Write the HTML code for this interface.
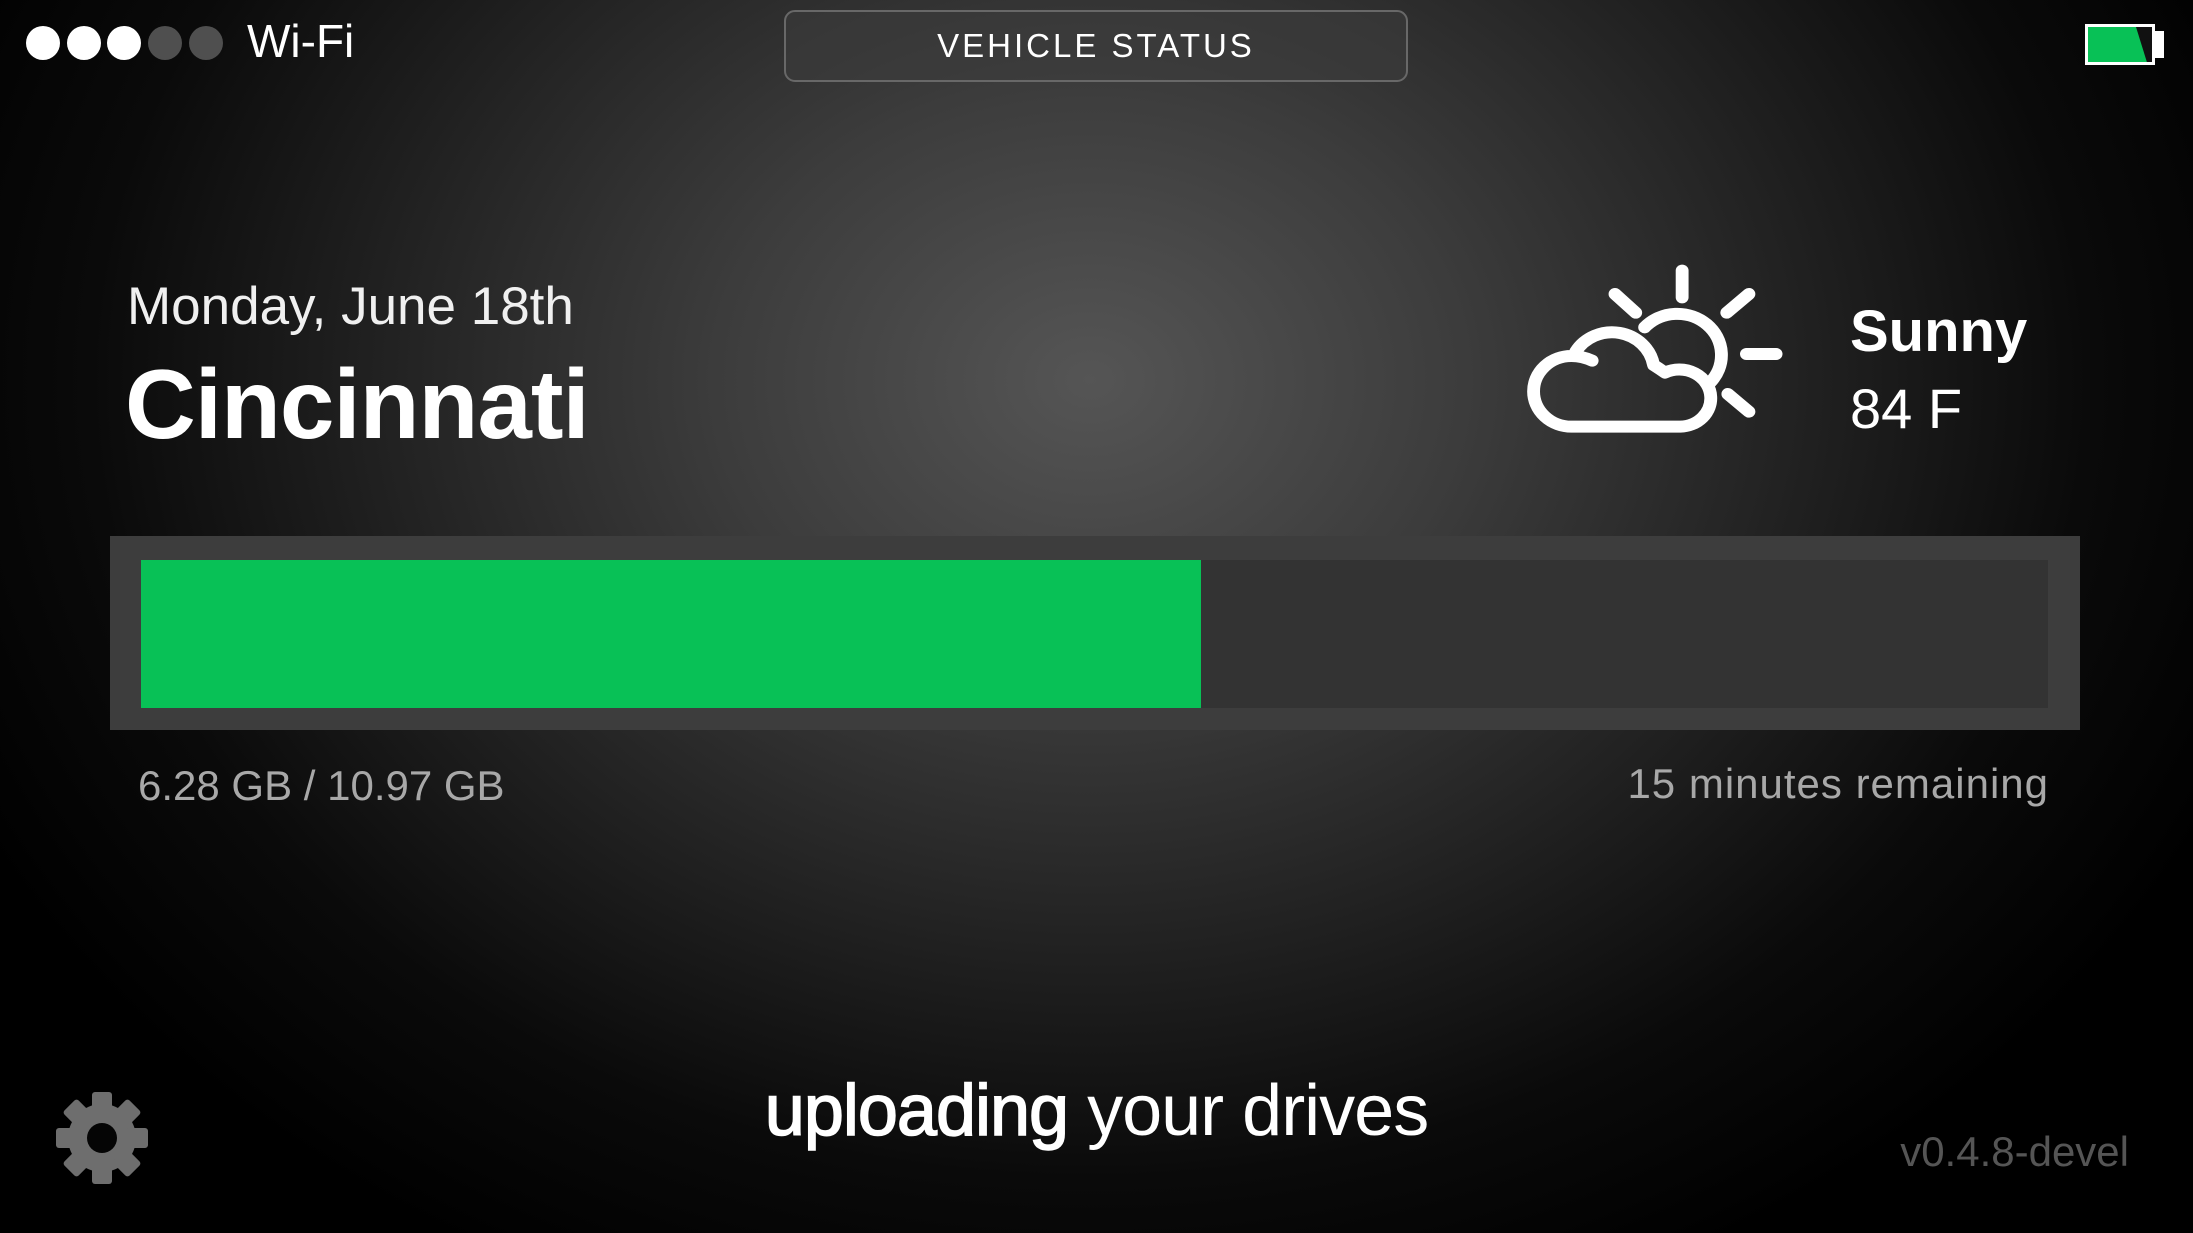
<!DOCTYPE html>
<html><head><meta charset="utf-8"><style>
html,body{margin:0;padding:0;}
body{width:2193px;height:1233px;overflow:hidden;position:relative;font-family:"Liberation Sans",sans-serif;color:#fff;
background:radial-gradient(ellipse 1250px 1000px at 1090px 380px,#555 0%,#3c3c3c 30%,#232323 55%,#0a0a0a 80%,#000 100%);}
.a{position:absolute;white-space:nowrap;}
.dot{position:absolute;top:26px;width:34px;height:34px;border-radius:50%;}
</style></head><body>
<div class="dot" style="left:26px;background:#fff"></div>
<div class="dot" style="left:67px;background:#fff"></div>
<div class="dot" style="left:107px;background:#fff"></div>
<div class="dot" style="left:148px;background:#4f4f4f"></div>
<div class="dot" style="left:189px;background:#4f4f4f"></div>
<div class="a" style="left:247px;top:14px;font-size:46px;">Wi-Fi</div>

<div class="a" style="left:784px;top:10px;width:620px;height:68px;border:2px solid #686868;border-radius:11px;background:rgba(60,60,60,0.6);text-align:center;line-height:68px;font-size:33px;letter-spacing:3px;">VEHICLE STATUS</div>

<div class="a" style="left:2085px;top:24px;width:64px;height:35px;border:3px solid #fff;background:#111;overflow:hidden;">
  <div style="position:absolute;left:0;top:0;width:64px;height:35px;background:#08c156;clip-path:polygon(0 0,75% 0,92% 100%,0 100%);"></div>
</div>
<div class="a" style="left:2155px;top:31px;width:9px;height:27px;background:#fff;"></div>

<div class="a" style="left:127px;top:276px;font-size:53px;color:#f0f0f0;">Monday, June 18th</div>
<div class="a" style="left:125px;top:348px;font-size:98px;font-weight:bold;letter-spacing:-1px;">Cincinnati</div>

<svg class="a" style="left:1500px;top:240px" width="560" height="220" viewBox="0 0 1568 660" preserveAspectRatio="none">
 <g fill="none" stroke="#fff" stroke-width="36" stroke-linecap="round" stroke-linejoin="round">
  <line x1="510" y1="92" x2="510" y2="172"/>
  <line x1="322" y1="162" x2="380" y2="218"/>
  <line x1="635" y1="218" x2="697" y2="162"/>
  <line x1="690" y1="342" x2="773" y2="342"/>
  <line x1="638" y1="462" x2="697" y2="515"/>
  <path d="M405 262 A118 118 0 0 1 588 428"/>
  <path d="M258 362 Q230 348 200 348 A106 106 0 0 0 200 560 L505 560 A88 85 0 0 0 590 470 A88 85 0 0 0 462 398 Q445 385 430 375 A118 118 0 0 0 212 335"/>
 </g>
</svg>
<div class="a" style="left:1850px;top:298px;font-size:58px;font-weight:bold;">Sunny</div>
<div class="a" style="left:1850px;top:376px;font-size:56px;">84 F</div>

<div class="a" style="left:110px;top:536px;width:1970px;height:194px;background:#3d3d3d;"></div>
<div class="a" style="left:141px;top:560px;width:1907px;height:148px;background:#333;"></div>
<div class="a" style="left:141px;top:560px;width:1060px;height:148px;background:#08c156;"></div>

<div class="a" style="left:138px;top:762px;font-size:42px;color:#a8a8a8;">6.28 GB / 10.97 GB</div>
<div class="a" style="right:144px;top:760px;font-size:42px;color:#a8a8a8;letter-spacing:1px;">15 minutes remaining</div>

<svg class="a" style="left:56px;top:1092px" width="92" height="92" viewBox="-46 -46 92 92">
 <g fill="#6e6e6e">
  <circle r="34"/>
  <rect x="-10" y="-46" width="20" height="22" rx="3"/>
  <rect x="-10" y="-46" width="20" height="22" rx="3" transform="rotate(45)"/>
  <rect x="-10" y="-46" width="20" height="22" rx="3" transform="rotate(90)"/>
  <rect x="-10" y="-46" width="20" height="22" rx="3" transform="rotate(135)"/>
  <rect x="-10" y="-46" width="20" height="22" rx="3" transform="rotate(180)"/>
  <rect x="-10" y="-46" width="20" height="22" rx="3" transform="rotate(225)"/>
  <rect x="-10" y="-46" width="20" height="22" rx="3" transform="rotate(270)"/>
  <rect x="-10" y="-46" width="20" height="22" rx="3" transform="rotate(315)"/>
 </g>
 <circle r="15" fill="#050505"/>
</svg>

<div class="a" style="left:0;width:2193px;top:1070px;text-align:center;font-size:72px;letter-spacing:-1px;"><span style="-webkit-text-stroke:1.5px #fff;">uploading</span> your drives</div>
<div class="a" style="right:64px;top:1128px;font-size:42px;color:#555;">v0.4.8-devel</div>
</body></html>
